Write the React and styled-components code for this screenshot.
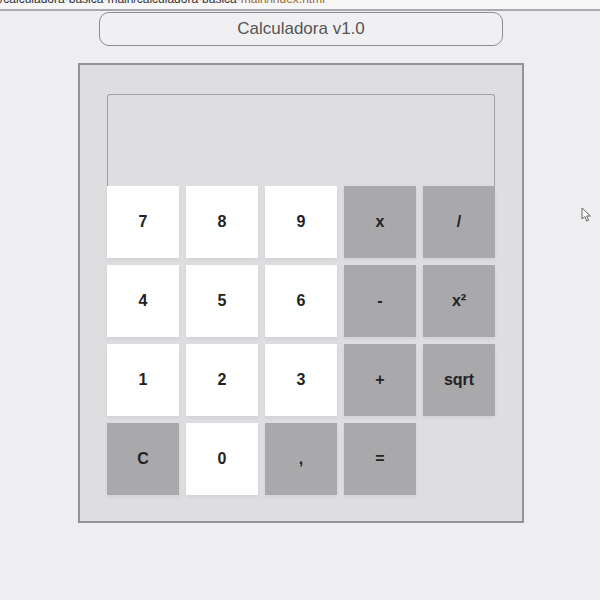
import React, { useState } from 'react';
import styled, { createGlobalStyle } from 'styled-components';

const GlobalStyle = createGlobalStyle`
  html, body {
    margin: 0;
    padding: 0;
    background: #eeedef;
    font-family: "Liberation Sans", Arial, sans-serif;
  }
`;

const Page = styled.div`
  position: relative;
  width: 600px;
  height: 600px;
  overflow: hidden;
`;

const PathBar = styled.div`
  height: 9px;
  overflow: hidden;
  background: #f6f6f7;
  border-bottom: 2px solid #a9a8aa;
`;

const PathText = styled.div`
  margin-top: -8px;
  font-size: 12px;
  line-height: 14px;
  color: #333;
  white-space: nowrap;
  span { color: #9a6a2a; }
`;

const Title = styled.div`
  box-sizing: border-box;
  width: 404px;
  height: 34px;
  margin: 1px 0 0 99px;
  border: 1.5px solid #8c8b8d;
  border-radius: 10px;
  background: #f0eff1;
  color: #555;
  font-size: 17px;
  display: flex;
  align-items: center;
  justify-content: center;
`;

const Calculator = styled.div`
  box-sizing: border-box;
  width: 446px;
  height: 460px;
  margin: 17px 0 0 78px;
  padding: 29px 27px 28px;
  background: #dedddf;
  border: 2px solid #949395;
`;

const Display = styled.div`
  box-sizing: border-box;
  height: 92px;
  border: 1px solid #a2a1a3;
  border-bottom: none;
  border-radius: 3px 3px 0 0;
  background: #dedddf;
  font-size: 28px;
  color: #222;
  text-align: right;
  padding: 12px;
`;

const Keys = styled.div`
  display: grid;
  grid-template-columns: repeat(5, 72px);
  grid-auto-rows: 72px;
  gap: 7px;
`;

const Key = styled.button`
  border: none;
  margin: 0;
  padding: 0;
  background: ${p => (p.op ? '#a9a8aa' : '#fefefe')};
  color: #222;
  font-family: "Liberation Sans", Arial, sans-serif;
  font-size: 16px;
  font-weight: bold;
  box-shadow: 0 2px 4px rgba(0, 0, 0, 0.06);
  cursor: pointer;
`;

const Cursor = styled.svg`
  position: absolute;
  left: 581px;
  top: 207px;
`;

const keys = [
  ['7'], ['8'], ['9'], ['x', true], ['/', true],
  ['4'], ['5'], ['6'], ['-', true], ['x²', true],
  ['1'], ['2'], ['3'], ['+', true], ['sqrt', true],
  ['C', true], ['0'], [',', true], ['=', true],
];

const App = () => {
  const [value, setValue] = useState('');

  return (
    <Page>
      <GlobalStyle />
      <PathBar>
        <PathText>
          /calculadora-basica-main/calculadora-basica-<span>main/index.html</span>
        </PathText>
      </PathBar>
      <Title>Calculadora v1.0</Title>
      <Calculator>
        <Display>{value}</Display>
        <Keys>
          {keys.map(([label, op]) => (
            <Key key={label} op={op ? 1 : 0} onClick={() => setValue(v => (label === 'C' ? '' : v + label))}>
              {label}
            </Key>
          ))}
        </Keys>
      </Calculator>
      <Cursor width="12" height="16" viewBox="0 0 12 16">
        <path d="M1 1 L1 12 L3.8 9.6 L5.8 14 L7.6 13.2 L5.6 9 L9.4 9 Z" fill="#fff" stroke="#555" strokeWidth="0.9" strokeLinejoin="round" />
      </Cursor>
    </Page>
  );
};

export default App;
